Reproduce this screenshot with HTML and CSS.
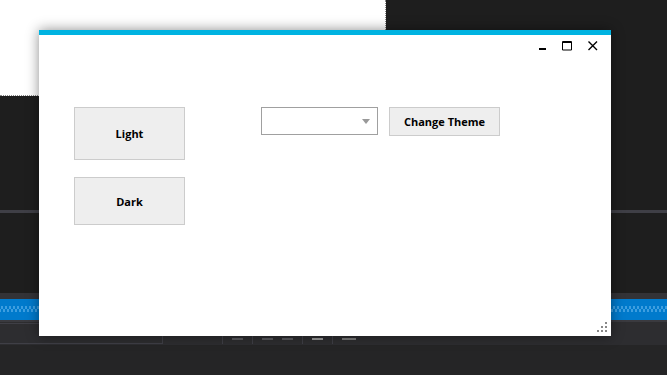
FILE: index.html
```html
<!DOCTYPE html>
<html lang="en-US">
<head>
	<meta charset="utf-8">
	<meta name="viewport" content="width=device-width, initial-scale=1.0">
	<link rel="stylesheet" href="styles.css">
</head>
<body>

	<div class="desk">
		<div class="top">
			<div class="doc"></div>
		</div>
		<div class="pane pane-upper"></div>
		<div class="splitter"></div>
		<div class="pane pane-lower"></div>
		<div class="tabstrip"></div>
		<div class="statusbar"><div class="dots"></div></div>
		<div class="toolbar">
			<div class="toolbox"></div>
			<span class="sep"></span>
			<span class="tool tool-a"></span>
			<span class="sep"></span>
			<span class="tool tool-b"></span>
			<span class="tool tool-b"></span>
			<span class="sep"></span>
			<span class="tool tool-c"></span>
			<span class="sep"></span>
			<span class="tool tool-d"></span>
		</div>
		<div class="bottom"></div>

		<div class="window">
			<div class="titlebar">
				<svg class="ctl" width="10" height="10" viewBox="0 0 10 10"><rect x="2" y="7" width="7" height="2" fill="#000"/></svg>
				<svg class="ctl" width="10" height="10" viewBox="0 0 10 10"><path d="M0.5 0.5h9v8.5h-9z M0.5 1.5h9" fill="none" stroke="#000" stroke-width="1"/></svg>
				<svg class="ctl" width="10" height="10" viewBox="0 0 10 10"><path d="M0.5 0.5l8.5 8.5 M9 0.5l-8.5 8.5" stroke="#000" stroke-width="1.4"/></svg>
			</div>
			<div class="content">
				<div class="themes">
					<button class="btn btn-light">Light</button>
					<button class="btn btn-dark">Dark</button>
				</div>
				<div class="picker">
					<div class="combo"><span class="arrow"></span></div>
					<button class="btn btn-change">Change Theme</button>
				</div>
			</div>
			<div class="grip">
				<span class="g13"></span>
				<span class="g22"></span><span class="g23"></span>
				<span class="g31"></span><span class="g32"></span><span class="g33"></span>
			</div>
		</div>
	</div>

</body>
</html>
```

FILE: styles.css
```css
* {
	box-sizing: border-box;
}
body {
	margin: 0;
	font-family: "Open Sans", "Noto Sans", sans-serif;
}
.desk {
	position: relative;
	width: 667px;
	height: 375px;
	display: flex;
	flex-direction: column;
	background: #1e1e1e;
	overflow: hidden;
}
.top {
	height: 96px;
	flex: none;
}
.doc {
	width: 386px;
	height: 96px;
	background: #fff;
	border-right: 1px dotted #8a8a8a;
	border-bottom: 1px dotted #8a8a8a;
}
.pane-upper {
	height: 114px;
}
.splitter {
	height: 3px;
	background: #3f3f46;
}
.pane-lower {
	height: 80px;
}
.tabstrip {
	height: 6px;
	background: #333337;
}
.statusbar {
	height: 21px;
	background: #007acc;
	padding-top: 7px;
}
.dots {
	height: 6px;
	background:
		radial-gradient(circle, #3d9ee0 45%, transparent 50%) 0 0 / 4px 3px repeat-x,
		radial-gradient(circle, #3d9ee0 45%, transparent 50%) 2px 3px / 4px 3px repeat-x;
}
.toolbar {
	height: 25px;
	background: #2d2d30;
	border-top: 2px solid #3a3a3f;
	display: flex;
	align-items: flex-start;
	gap: 9px;
}
.toolbox {
	width: 163px;
	height: 21px;
	border: 1px solid #3f3f46;
	border-left: 0;
	margin-top: 1px;
	margin-right: 50px;
}
.sep {
	width: 1px;
	height: 20px;
	background: #3f3f46;
	margin-top: 2px;
}
.tool {
	height: 2px;
	margin-top: 16px;
	background: #5a5a5e;
}
.tool-a { width: 11px; }
.tool-b { width: 11px; }
.tool-c { width: 11px; background: #9a9a9a; }
.tool-d { width: 14px; background: #7a7a7a; }
.bottom {
	flex: 1;
	background: #252526;
}

/* the app window floating over the ide */
.window {
	position: absolute;
	left: 39px;
	top: 30px;
	width: 572px;
	height: 306px;
	background: #fff;
	border-top: 5px solid #00b3e1;
	box-shadow: 0 0 12px rgba(0,0,0,0.45);
}
.titlebar {
	height: 23px;
	display: flex;
	justify-content: flex-end;
	gap: 15px;
	padding: 6px 13px 0 0;
}
.titlebar .ctl:last-child {
	margin-left: 1px;
}
.content {
	display: flex;
	align-items: flex-start;
	padding: 49px 0 0 35px;
}
.themes {
	display: flex;
	flex-direction: column;
	gap: 17px;
}
.btn {
	display: block;
	background: #eeeeee;
	border: 1px solid #cccccc;
	font-family: "Open Sans", "Noto Sans", sans-serif;
	font-weight: 700;
	font-size: 11px;
	color: #000;
	padding: 0;
}
.btn-light {
	width: 111px;
	height: 53px;
}
.btn-dark {
	width: 111px;
	height: 48px;
}
.picker {
	display: flex;
	gap: 11px;
	margin-left: 76px;
}
.combo {
	position: relative;
	width: 117px;
	height: 28px;
	border: 1px solid #a0a0a0;
	background: #fff;
}
.arrow {
	position: absolute;
	right: 7px;
	top: 11px;
	width: 0;
	height: 0;
	border-left: 4px solid transparent;
	border-right: 4px solid transparent;
	border-top: 5px solid #999;
}
.btn-change {
	width: 111px;
	height: 29px;
}
.grip {
	position: absolute;
	right: 4px;
	bottom: 4px;
	display: grid;
	grid-template-columns: repeat(3, 2px);
	grid-template-rows: repeat(3, 2px);
	gap: 2px;
}
.grip span {
	background: #888;
}
.g13 { grid-area: 1 / 3; }
.g22 { grid-area: 2 / 2; }
.g23 { grid-area: 2 / 3; }
.g31 { grid-area: 3 / 1; }
.g32 { grid-area: 3 / 2; }
.g33 { grid-area: 3 / 3; }
```
